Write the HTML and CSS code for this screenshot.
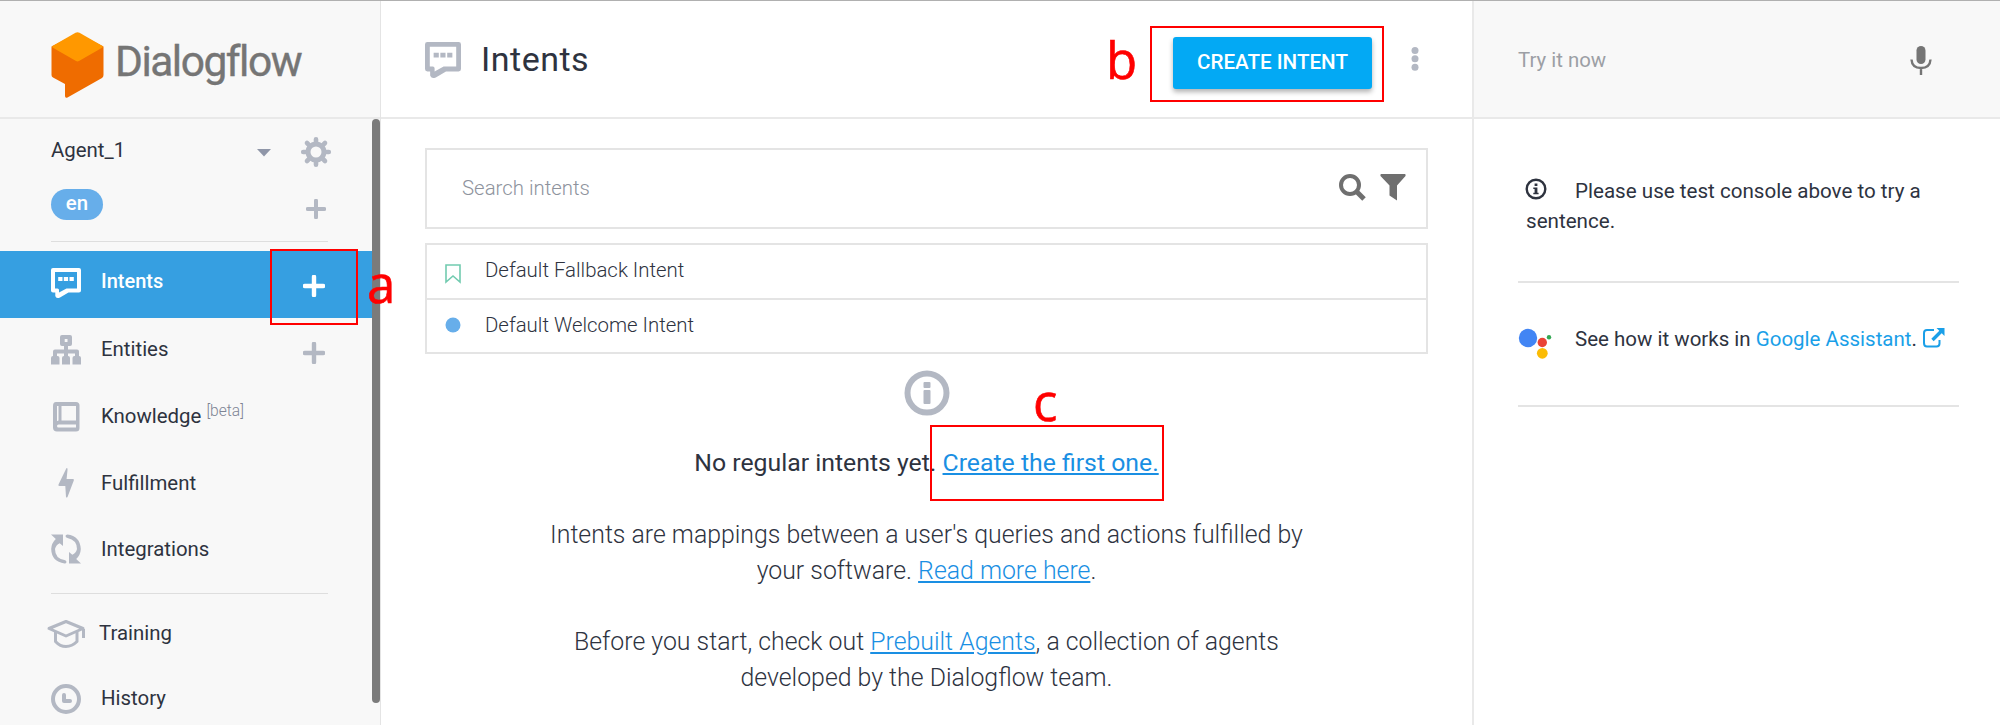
FILE: index.html
```html
<!DOCTYPE html>
<html lang="en">
<head>
<meta charset="utf-8">
<title>Dialogflow - Intents</title>
<link rel="stylesheet" href="styles.css">
</head>
<body>
<svg class="defs" width="0" height="0" aria-hidden="true">
  <symbol id="chat" viewBox="0 0 30 30"><path fill-rule="evenodd" d="M2 0H28Q30 0 30 2V22.500Q30 24.500 28 24.500H17.500L9 29.500Q5 31 4.300 28V24.500H2Q0 24.500 0 22.500V2Q0 0 2 0ZM4 4V20.500H6.500Q8 20.500 8 22V24.500L15.500 20.500H26V4Z"/><path d="M7.200 9h4.300v4H7.200zM12.800 9h4.300v4h-4.300zM18.500 9h4.300v4h-4.300z"/></symbol>
  <symbol id="plus" viewBox="0 0 22 22"><path d="M11 1.800V20.200M1.800 11H20.200" fill="none" stroke="currentColor" stroke-width="4.400" stroke-linecap="round"/></symbol>
</svg>
<div class="app">
  <aside class="sidebar">
    <div class="brand">
      <svg class="logo" viewBox="0 0 52 66"><path fill="#ef6c00" d="M0 14.500L26 1L52 14.500V43Q52 45 50.500 46L16 65.500Q13.500 66.500 13.500 64V52L1.500 45.500Q0 44.500 0 43Z"/><path fill="#ff9800" d="M1 14L24 .8Q26 -.3 28 .8L51 14Q52 14.800 51 15.600L27.500 29Q26 29.800 24.500 29L1 15.600Q0 14.800 1 14Z"/></svg>
      <span class="brand-name">Dialogflow</span>
    </div>
    <div class="side-body">
      <div class="menu">
        <div class="agent">
          <span>Agent_1</span>
          <svg class="caret" viewBox="0 0 14 8"><path d="M0 0H14L7 7.500Z"/></svg>
          <svg class="gear" viewBox="0 0 30 30"><g stroke="#b3b8c3" fill="none"><circle cx="15" cy="15" r="8" stroke-width="5"/><path stroke-width="4.600" stroke-linecap="round" d="M15 2.200V6M15 24V27.800M2.200 15H6M24 15H27.800M6 6L8.600 8.600M21.400 21.400L24 24M6 24L8.600 21.400M21.400 8.600L24 6"/></g></svg>
        </div>
        <div class="lang"><span class="pill">en</span><svg class="plus small"><use href="#plus"/></svg></div>
        <div class="rule"></div>
        <nav>
          <div class="item active"><svg class="ico"><use href="#chat"/></svg><span>Intents</span><svg class="plus"><use href="#plus"/></svg></div>
          <div class="item"><svg class="ico" viewBox="0 0 30 30"><path fill-rule="evenodd" d="M11 0H19Q21 0 21 2V9Q21 11 19 11H17V14.500H26Q28 14.500 28 16.500V21Q30 21 30 23V29.500H21.500V23Q21.500 21 23.500 21H24V18.500H17V21Q19 21 19 23V29.500H11V23Q11 21 13 21V18.500H6V21H6.500Q8.500 21 8.500 23V29.500H0V23Q0 21 2 21V16.500Q2 14.500 4 14.500H13V11H11Q9 11 9 9V2Q9 0 11 0ZM13.700 4V7H16.500V4Z"/></svg><span>Entities</span><svg class="plus"><use href="#plus"/></svg></div>
          <div class="item"><svg class="ico" viewBox="0 0 30 30"><path fill-rule="evenodd" d="M5 0H25Q28.500 0 28.500 3.500V26Q28.500 29.500 25 29.500H6Q2 29.500 2 25.500V4Q2 0 5 0ZM6 4V19Q6 19 7.500 18.500V4ZM10.500 4V18.500H25V4ZM7.500 22.500Q6 22.500 6 24T7.500 25.500H25V22.500Z"/></svg><span>Knowledge <sup>[beta]</sup></span></div>
          <div class="item short"><svg class="ico" viewBox="0 0 30 30"><path d="M15.500 0Q17 0 16.500 2L15.600 11H22Q23.500 11 22.800 12.500L16.500 29Q15.600 30 15 29L14.300 18H8.500Q7 18 7.500 16.500Z"/></svg><span>Fulfillment</span></div>
          <div class="item short"><svg class="ico" viewBox="0 0 30 30"><path d="M0 .5H12V12L8.700 9.200A8.500 8.500 0 0 0 4 15Q4 24.500 13.500 26Q15.500 26.500 15.500 28T13.500 29.500Q.5 27.500 .2 15Q.5 9 4.800 5ZM30 29.500H18V18L21.300 20.800A8.500 8.500 0 0 0 26 15Q26 6 16.500 4Q14.500 3.500 14.500 2T16.500 .5Q29 2 29.800 15Q29.500 21 25.200 25Z"/></svg><span>Integrations</span></div>
          <div class="rule second"></div>
          <div class="item last"><svg class="ico cap" viewBox="0 0 38 30"><g fill="none" stroke="currentColor" stroke-width="3" stroke-linejoin="round"><path d="M2 9.500L19 2.500L36 9.500L19 17Z"/><path d="M8.500 13V22.500Q13 27.500 19 27.500T30 22.500V13M36.500 10V19"/></g></svg><span class="training">Training</span></div>
          <div class="item last"><svg class="ico" viewBox="0 0 30 30"><circle cx="15" cy="15" r="13" fill="none" stroke="currentColor" stroke-width="4"/><path d="M11 11Q11 9 13 9T15 11V15H19Q21 15 21 17T19 19H13Q11 19 11 17Z"/></svg><span>History</span></div>
        </nav>
      </div>
      <div class="scrollbar"></div>
    </div>
  </aside>

  <main class="main">
    <header class="head">
      <svg class="title-icon"><use href="#chat"/></svg>
      <h1>Intents</h1>
      <button class="create">CREATE INTENT</button>
      <svg class="kebab" viewBox="0 0 8 26"><circle cx="4" cy="4.500" r="3.500"/><circle cx="4" cy="12.800" r="3.500"/><circle cx="4" cy="21.200" r="3.500"/></svg>
    </header>
    <div class="search">
      <span>Search intents</span>
      <svg class="lens" viewBox="0 0 27 27"><g fill="none" stroke="#6f6f6f"><circle cx="11" cy="11" r="9" stroke-width="4"/><path d="M17.500 17.500L25 25" stroke-width="5"/></g></svg>
      <svg class="funnel" viewBox="0 0 26 27"><path fill="#6f6f6f" d="M1 0H25Q26 .5 25.500 2L17 11.500V26.500L9.500 21.500V11.500L.5 2Q0 .5 1 0Z"/></svg>
    </div>
    <div class="list">
      <div class="intent"><svg viewBox="0 0 16 20"><path d="M1 1H15V18L8 12L1 18Z" fill="none" stroke="#72cbb0" stroke-width="1.600"/></svg><span>Default Fallback Intent</span></div>
      <div class="intent"><svg viewBox="0 0 16 20"><circle cx="8" cy="10" r="7.500" fill="#67aeea"/></svg><span class="welcome">Default Welcome Intent</span></div>
    </div>
    <section class="empty">
      <svg class="info" viewBox="0 0 46 46"><circle cx="23" cy="23" r="19.500" fill="none" stroke="currentColor" stroke-width="6"/><rect x="19.500" y="12" width="7" height="6" rx="1"/><rect x="19.500" y="20" width="7" height="14" rx="1"/></svg>
      <p class="none">No regular intents yet. <a>Create the first one.</a></p>
      <p class="text"><span>Intents are mappings between a user's queries and actions fulfilled by</span><br><span>your software. <a>Read more here</a>.</span></p>
      <p class="text"><span>Before you start, check out <a>Prebuilt Agents</a>, a collection of agents</span><br><span>developed by the Dialogflow team.</span></p>
    </section>
  </main>

  <aside class="console">
    <div class="try"><span>Try it now</span>
      <svg class="mic" viewBox="0 0 22 29"><rect x="6.500" y="0" width="9" height="18" rx="4.500" fill="#757575"/><path d="M1.500 13.500Q2 22 11 22T20.500 13.500M11 22V29" fill="none" stroke="#757575" stroke-width="2.400"/></svg>
    </div>
    <div class="help">
      <p><svg class="tip" viewBox="0 0 22 22"><circle cx="11" cy="11" r="9.300" fill="none" stroke="currentColor" stroke-width="2.400"/><rect x="9.600" y="5.500" width="2.800" height="2.500"/><path d="M8.300 9.500h4.100v5.200h1.200v1.500H8.300v-1.500h1.300v-3.700H8.300z"/></svg>Please use test console above to try a<br>sentence.</p>
    </div>
    <div class="assist">
      <svg class="ga" viewBox="0 0 34 32"><circle cx="10" cy="10" r="9.200" fill="#4285f4"/><circle cx="24.300" cy="14.500" r="4.700" fill="#ea4335"/><circle cx="31" cy="9.200" r="2.200" fill="#34a853"/><circle cx="24.300" cy="25.300" r="5.400" fill="#fbbc05"/></svg>
      <span>See how it works in <a>Google Assistant</a>.</span>
      <svg class="ext" viewBox="0 0 22 20"><path d="M11 2H4Q1 2 1 5V15Q1 18.500 4 18.500H13.500Q16.500 18.500 16.500 15.500V12" fill="none" stroke="currentColor" stroke-width="2"/><path d="M9.500 12L18 3.500" stroke="currentColor" stroke-width="3.400"/><path d="M13.500 0H21.500V8Z"/></svg>
    </div>
  </aside>

  <div class="mark box-a"></div><div class="letter a">a</div>
  <div class="mark box-b"></div><div class="letter b">b</div>
  <div class="mark box-c"></div><div class="letter c">c</div>
</div>
</body>
</html>
```
FILE: styles.css
```css
* { box-sizing: border-box; }
body { margin: 0; font-family: Roboto, sans-serif; font-size: 20.4px; color: #2e333f; background: #fff; }
svg { display: block; flex: none; fill: currentColor; overflow: visible; }
.defs { position: absolute; }
p, h1 { margin: 0; }
a { color: #1a8fe3; text-underline-offset: 2px; }
.app { position: relative; display: grid; grid-template-columns: 381px 1093px 526px; height: 725px; overflow: hidden; border-top: 1px solid #b0b0b0; white-space: nowrap; }

.sidebar { display: flex; flex-direction: column; background: #f8f8f8; border-right: 1px solid #e4e4e4; min-width: 0; }
.brand { display: flex; align-items: flex-start; height: 118px; padding: 31px 0 0 51px; border-bottom: 2px solid #e9e9e9; flex: none; }
.logo { width: 53px; height: 66px; }
.brand-name { margin-left: 11px; font-size: 42.500px; line-height: 60px; letter-spacing: -1.500px; color: #757575; -webkit-text-stroke: .4px #757575; }
.side-body { display: flex; height: 606px; }
.menu { width: 372px; flex: none; }
.scrollbar { width: 8px; height: 584px; border-radius: 4px; background: #7b7b7b; }
.agent { display: flex; align-items: center; height: 62px; padding-left: 51px; }
.agent span { width: 206px; }
.caret { width: 14px; height: 8px; margin-top: 5px; color: #8f96a8; }
.gear { width: 30px; height: 30px; margin-left: 30px; margin-top: 4px; }
.lang { display: flex; align-items: flex-start; height: 60px; padding: 8px 0 0 51px; }
.pill { width: 52px; height: 31px; border-radius: 16px; background: #67aeea; color: #fff; font-weight: 500; line-height: 29px; text-align: center; }
.plus { width: 22px; height: 22px; color: #b3b8c3; }
.plus.small { width: 20px; height: 20px; margin: 10px 0 0 203px; }
.rule { width: 277px; height: 1px; margin: 0 0 0 51px; background: #dedede; }
.rule + nav { padding-top: 9px; }
.item { display: flex; align-items: center; height: 67px; padding: 0 0 4px 51px; }
.item span { margin-top: -1px; }
.item.short { height: 66px; }
.item.last { height: 65px; padding-bottom: 0; }
.item.active { background: #369fe1; color: #fff; font-weight: 500; }
.item.active span { margin-top: -3px; font-size: 20px; }
.item .ico { width: 30px; height: 30px; margin-right: 20px; color: #b3b8c3; }
.item .ico.cap { width: 38px; margin: 0 14px 0 -4px; }
.item .plus { position: relative; top: 3px; margin-left: auto; margin-right: 47px; }
.item.active svg { color: #fff; }
.item sup { font-size: 15.600px; font-weight: 300; line-height: 0; vertical-align: 7px; color: #7d8494; }
.rule.second { margin-top: 9px; margin-bottom: 7px; }

.main { border-right: 2px solid #e9e9e9; min-width: 0; }
.head { display: flex; align-items: center; height: 118px; padding-left: 44px; border-bottom: 2px solid #e9e9e9; }
.title-icon { width: 36px; height: 36px; color: #b3b8c3; margin-top: 1px; }
.head h1 { width: 692px; margin-left: 20px; font-weight: 400; font-size: 34px; letter-spacing: .5px; }
.create { width: 199px; height: 52px; margin-top: 8px; padding: 0 0 2px; border: 0; border-radius: 3px; background: #03a9f4; color: #fff; font: 500 20.600px Roboto, sans-serif; box-shadow: 0 3px 5px rgba(0,0,0,.3); }
.kebab { width: 8px; height: 26px; margin-left: 39px; color: #b3b8c3; }
.search { display: flex; align-items: center; height: 81px; margin: 29px 44px 0; padding: 0 0 2px 35px; border: 2px solid #e4e4e4; font-weight: 300; color: #8e939d; }
.search span { width: 877px; }
.lens { width: 27px; height: 27px; }
.funnel { width: 26px; height: 27px; margin-left: 14px; }
.list { margin: 14px 44px 0; border: 2px solid #e4e4e4; height: 111px; }
.intent { display: flex; align-items: center; height: 53px; padding: 0 0 3px 18px; font-weight: 300; }
.intent + .intent { height: 54px; border-top: 2px solid #e4e4e4; }
.intent svg { width: 16px; height: 20px; margin-right: 24px; }
.intent:first-child svg { margin-top: 8px; }
.empty { display: flex; flex-direction: column; align-items: center; padding-top: 16px; text-align: center; }
.info { width: 46px; height: 46px; color: #b3b8c3; }
.none { margin-top: 29px; font-size: 24.800px; line-height: 36px; }
.none a, .text a { text-decoration: underline; }
.text { margin-top: 36px; font-size: 24.850px; font-weight: 300; line-height: 35.600px; }

.console { min-width: 0; }
.try { display: flex; align-items: center; height: 118px; padding: 2px 68px 0 44px; background: #f8f8f8; border-bottom: 2px solid #e9e9e9; color: #9c9fa5; }
.mic { width: 22px; height: 29px; margin-left: auto; }
.help { height: 162px; margin: 0 41px 0 44px; padding: 57px 0 0 8px; font-size: 20.600px; line-height: 30px; }
.tip { display: inline-block; width: 22px; height: 22px; margin: 0 28px 0 -1px; vertical-align: -2px; }
.assist { display: flex; align-items: flex-start; height: 126px; margin: 0 41px 0 44px; padding-top: 45px; border-top: 2px solid #e4e4e4; border-bottom: 2px solid #e4e4e4; font-size: 20.500px; line-height: 22px; }
.ga { width: 34px; height: 32px; }
.assist span { margin-left: 23px; }
.ext { width: 22px; height: 20px; margin-left: 6px; color: #1a9fe8; }
.assist a { color: #1a9fe8; }

.mark { position: absolute; border: 2px solid #f00; height: 76px; width: 234px; }
.box-a { left: 270px; top: 248px; width: 88px; }
.box-b { left: 1150px; top: 25px; }
.box-c { left: 930px; top: 424px; }
.letter { position: absolute; color: #f00; font: 51px/60px "Open Sans", sans-serif; -webkit-text-stroke: .6px #f00; }
.letter.a { left: 367px; top: 252px; }
.letter.b { left: 1106px; top: 28px; }
.letter.c { left: 1033px; top: 370px; }
```
